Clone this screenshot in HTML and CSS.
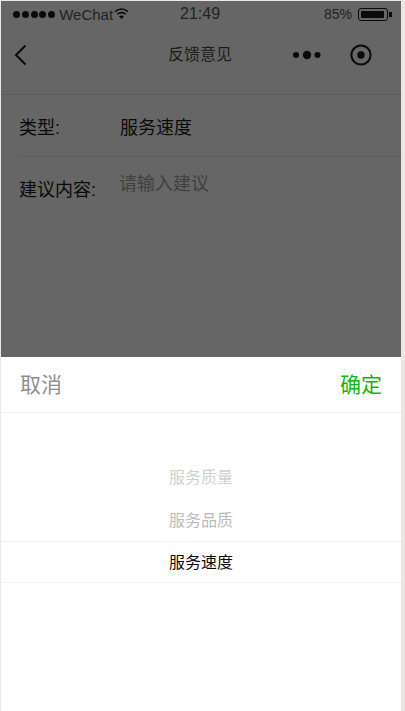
FILE: index.html
```html
<!DOCTYPE html>
<html lang="zh-CN">
<head>
<meta charset="utf-8">
<title>反馈意见</title>
<link rel="stylesheet" href="styles.css">
</head>
<body>
<div class="phone">
  <section class="page">
    <div class="status">
      <div class="status-left">
        <span class="signal"><i></i><i></i><i></i><i></i><i></i></span>
        <span class="carrier">WeChat</span>
        <svg class="wifi" width="15" height="12" viewBox="0 0 15 12"><path d="M1 3.6C5 .4 10 .4 14 3.6" fill="none" stroke="#0a0a0a" stroke-width="1.6"/><path d="M3.3 6.2c2.6-2 5.8-2 8.4 0" fill="none" stroke="#0a0a0a" stroke-width="1.6"/><path d="M5 8.2c1.6-1 3.4-1 5 0L7.5 11z" fill="#0a0a0a"/></svg>
      </div>
      <span class="clock">21:49</span>
      <div class="status-right">
        <span class="percent">85%</span>
        <span class="battery"><b></b></span><span class="nub"></span>
      </div>
    </div>
    <header class="nav">
      <svg class="back" width="13" height="22" viewBox="0 0 13 22"><path d="M11.5 1.5 2 11l9.5 9.5" fill="none" stroke="#0a0a0a" stroke-width="2"/></svg>
      <h1 class="title">反馈意见</h1>
      <div class="capsule">
        <svg class="more" width="28" height="10" viewBox="0 0 28 10"><circle cx="3" cy="5" r="3" fill="#0a0a0a"/><circle cx="14" cy="5" r="4.2" fill="#0a0a0a"/><circle cx="24.5" cy="5" r="3" fill="#0a0a0a"/></svg>
        <svg class="target" width="22" height="22" viewBox="0 0 22 22"><circle cx="11" cy="11" r="9.6" fill="none" stroke="#0a0a0a" stroke-width="2"/><circle cx="11" cy="11" r="3.7" fill="#0a0a0a"/></svg>
      </div>
    </header>
    <div class="form">
      <div class="row">
        <span class="label">类型:</span>
        <span class="value">服务速度</span>
      </div>
      <div class="row row-text">
        <span class="label">建议内容:</span>
        <span class="placeholder">请输入建议</span>
      </div>
    </div>
  </section>
  <section class="sheet">
    <div class="actions">
      <span class="cancel">取消</span>
      <span class="confirm">确定</span>
    </div>
    <div class="wheel">
      <div class="option far">服务质量</div>
      <div class="option near">服务品质</div>
      <div class="option current">服务速度</div>
    </div>
  </section>
</div>
</body>
</html>
```
FILE: styles.css
```css
* { box-sizing: border-box; }
html, body { margin: 0; height: 100%; }
body {
  background: #e9e8e6;
  font-family: "Liberation Sans", "Noto Sans CJK SC", sans-serif;
  color: #0a0a0a;
  overflow: hidden;
}
.phone {
  width: 400px;
  height: 711px;
  margin-left: 1px;
  padding-top: 1px;
  display: flex;
  flex-direction: column;
}
.page { height: 356px; background: #666; }
.status {
  height: 26px;
  padding: 0 9px 0 12px;
  display: flex;
  align-items: center;
  position: relative;
  font-size: 14px;
  color: #222;
}
.status-left { display: flex; align-items: center; }
.signal { display: flex; gap: 1.8px; margin-right: 4px; }
.signal i { width: 7px; height: 7px; border-radius: 50%; background: #0a0a0a; }
.carrier { font-size: 15px; }
.wifi { margin-left: 1px; }
.clock { position: absolute; left: 179px; font-size: 16px; }
.status-right { margin-left: auto; display: flex; align-items: center; }
.percent { font-size: 14px; margin-right: 6px; }
.battery {
  width: 30px; height: 13px; padding: 2px;
  border: 1px solid #0a0a0a; border-radius: 3px; display: flex;
}
.battery b { width: 23px; background: #0a0a0a; border-radius: 1px; }
.nub { width: 3px; height: 5px; margin-left: 1px; background: #0a0a0a; }
.nav {
  height: 68px;
  padding: 2px 29px 14px 13px;
  display: flex;
  align-items: center;
  position: relative;
  border-bottom: 1px solid #5c5c5c;
}
.title {
  position: absolute; left: 167px; top: 16px;
  margin: 0; font-size: 16px; font-weight: 400; color: #1c1c1c; line-height: 24px;
}
.capsule { margin-left: auto; display: flex; align-items: center; gap: 29px; }
.form { padding-left: 18px; }
.row {
  height: 61px;
  display: flex;
  align-items: center;
  font-size: 18px;
}
.row + .row { border-top: 1px solid #5c5c5c; margin-left: 1px; }
.label { width: 101px; flex: none; }
.row-text { align-items: flex-start; padding-top: 19px; }
.row-text .label { width: 100px; margin-left: -1px; padding-top: 2px; line-height: 24px; }
.placeholder { color: #404040; margin-top: -4px; line-height: 24px; }
.sheet { flex: 1; background: #fff; }
.actions {
  height: 56px;
  padding: 0 19px 4px;
  display: flex;
  align-items: center;
  justify-content: space-between;
  border-bottom: 1px solid #f3f3f3;
  font-size: 21px;
}
.cancel { color: #8f8f8f; }
.confirm { color: #12b712; }
.wheel { padding-top: 44px; }
.option { height: 42px; line-height: 42px; text-align: center; font-size: 16px; }
.far { color: #d0d0d0; }
.near { color: #bbb; line-height: 43px; }
.current {
  color: #0a0a0a;
  border-top: 1px solid #eee;
  border-bottom: 1px solid #f3f3f3;
}
```
